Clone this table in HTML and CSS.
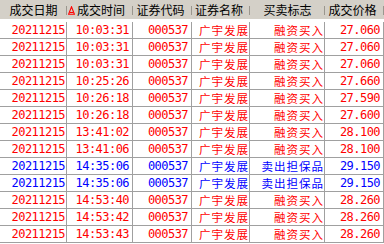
FILE: index.html
```html
<!DOCTYPE html>
<html>
<head>
<meta charset="utf-8">
<link rel="stylesheet" href="styles.css">
</head>
<body>
<div class="grid">
  <div class="head">
    <div class="hc">成交日期</div>
    <div class="hc sorted"><svg class="tri" width="7" height="9" viewBox="0 0 7 9"><path d="M3.5 0.8 L6.4 8.3 L0.6 8.3 Z" fill="none" stroke="#f00" stroke-width="1.1"/><path d="M2 6.5 H5" stroke="#f00" stroke-width="1"/></svg>成交时间</div>
    <div class="hc shift">证券代码</div>
    <div class="hc shift">证券名称</div>
    <div class="hc">买卖标志</div>
    <div class="hc shift">成交价格</div>
  </div>
  <div class="gap"></div>
  <div class="row red"><span class="c1">20211215</span><span class="c2">10:03:31</span><span class="c3">000537</span><span class="c4">广宇发展</span><span class="c5">融资买入</span><span class="c6">27.060</span></div>
  <div class="row red"><span class="c1">20211215</span><span class="c2">10:03:31</span><span class="c3">000537</span><span class="c4">广宇发展</span><span class="c5">融资买入</span><span class="c6">27.060</span></div>
  <div class="row red"><span class="c1">20211215</span><span class="c2">10:03:31</span><span class="c3">000537</span><span class="c4">广宇发展</span><span class="c5">融资买入</span><span class="c6">27.060</span></div>
  <div class="row red"><span class="c1">20211215</span><span class="c2">10:25:26</span><span class="c3">000537</span><span class="c4">广宇发展</span><span class="c5">融资买入</span><span class="c6">27.660</span></div>
  <div class="row red"><span class="c1">20211215</span><span class="c2">10:26:18</span><span class="c3">000537</span><span class="c4">广宇发展</span><span class="c5">融资买入</span><span class="c6">27.590</span></div>
  <div class="row red"><span class="c1">20211215</span><span class="c2">10:26:18</span><span class="c3">000537</span><span class="c4">广宇发展</span><span class="c5">融资买入</span><span class="c6">27.600</span></div>
  <div class="row red"><span class="c1">20211215</span><span class="c2">13:41:02</span><span class="c3">000537</span><span class="c4">广宇发展</span><span class="c5">融资买入</span><span class="c6">28.100</span></div>
  <div class="row red"><span class="c1">20211215</span><span class="c2">13:41:06</span><span class="c3">000537</span><span class="c4">广宇发展</span><span class="c5">融资买入</span><span class="c6">28.100</span></div>
  <div class="row blue"><span class="c1">20211215</span><span class="c2">14:35:06</span><span class="c3">000537</span><span class="c4">广宇发展</span><span class="c5">卖出担保品</span><span class="c6">29.150</span></div>
  <div class="row blue"><span class="c1">20211215</span><span class="c2">14:35:06</span><span class="c3">000537</span><span class="c4">广宇发展</span><span class="c5">卖出担保品</span><span class="c6">29.150</span></div>
  <div class="row red"><span class="c1">20211215</span><span class="c2">14:53:40</span><span class="c3">000537</span><span class="c4">广宇发展</span><span class="c5">融资买入</span><span class="c6">28.260</span></div>
  <div class="row red"><span class="c1">20211215</span><span class="c2">14:53:42</span><span class="c3">000537</span><span class="c4">广宇发展</span><span class="c5">融资买入</span><span class="c6">28.260</span></div>
  <div class="row red"><span class="c1">20211215</span><span class="c2">14:53:43</span><span class="c3">000537</span><span class="c4">广宇发展</span><span class="c5">融资买入</span><span class="c6">28.260</span></div>
</div>
</body>
</html>
```
FILE: styles.css
```css
html, body {
  margin: 0;
  padding: 0;
  background: #ffffff;
}
.grid {
  width: 384px;
  height: 244px;
  overflow: hidden;
  background: #ffffff;
}
.head, .row {
  display: grid;
  grid-template-columns: 67px 66px 59px 58px 75px 59px;
}
.head {
  height: 19px;
  background: #d4d0c8;
  font-family: "Noto Sans CJK SC", sans-serif;
  font-size: 12px;
  color: #000;
}
.hc {
  position: relative;
  display: flex;
  align-items: center;
  justify-content: center;
  line-height: 16px;
  padding-top: 1px;
}
.hc.shift {
  padding-right: 4px;
}
.hc::after {
  content: "";
  position: absolute;
  right: 0;
  top: 6px;
  width: 1px;
  height: 9px;
  background: #9a968e;
}
.hc.sorted {
  justify-content: flex-start;
  padding-left: 1px;
}
.tri {
  margin-right: 2px;
}
.gap {
  height: 3px;
}
.row {
  height: 16px;
  border-bottom: 1px solid #a0a0a0;
}
.row span {
  display: flex;
  align-items: center;
  justify-content: flex-end;
  border-right: 1px solid #a0a0a0;
  white-space: nowrap;
  line-height: 16px;
}
.row .c1, .row .c2, .row .c3, .row .c6 {
  font-family: "DejaVu Sans Mono", monospace;
  font-size: 12px;
  letter-spacing: -0.55px;
}
.row .c4, .row .c5 {
  font-family: "Noto Sans CJK SC", sans-serif;
  font-size: 11.5px;
  letter-spacing: 1px;
}
.row .c1 { padding-right: 1px; }
.row .c2 { padding-right: 3px; }
.row .c3 { padding-right: 3px; }
.row .c4 { padding-right: 0; }
.row .c5 { padding-right: 0; }
.row .c6 { padding-right: 3px; }
.red { color: #ff0000; }
.blue { color: #0000ff; }
```
